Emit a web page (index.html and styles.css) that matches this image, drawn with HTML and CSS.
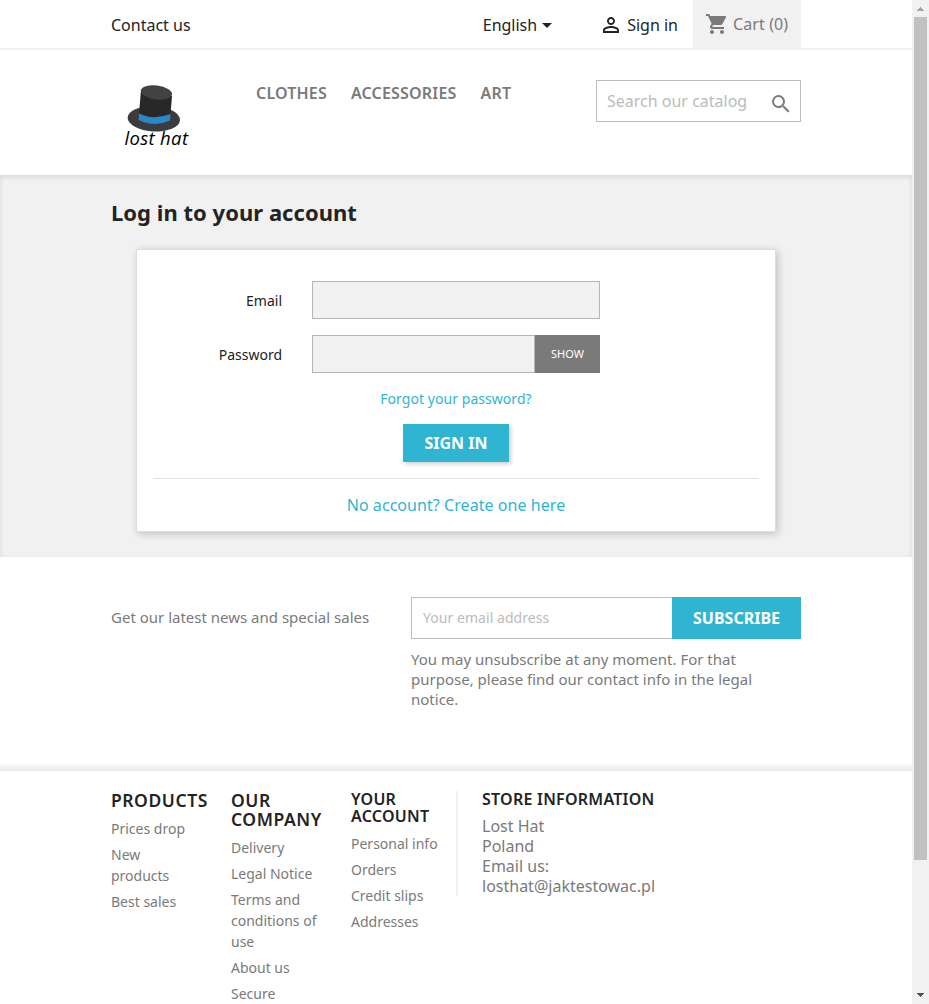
FILE: index.html
```
<!DOCTYPE html>
<html lang="en">
<head>
<meta charset="utf-8">
<title>Login</title>
<link rel="stylesheet" href="styles.css">
</head>
<body>
<div class="page">
  <header class="header">
    <nav class="topbar">
      <a class="contact">Contact us</a>
      <div class="language">English <span class="caret"></span></div>
      <a class="signin"><svg class="user-icon" viewBox="4 4 16 16"><path fill="#232323" d="M12 5.900c1.160 0 2.100.940 2.100 2.100s-.940 2.100-2.100 2.100S9.900 9.160 9.900 8s.940-2.100 2.100-2.100m0 9c2.970 0 6.100 1.460 6.100 2.100v1.100H5.900V17c0-.640 3.130-2.100 6.100-2.100M12 4C9.790 4 8 5.790 8 8s1.790 4 4 4 4-1.790 4-4-1.790-4-4-4zm0 9c-2.670 0-8 1.340-8 4v3h16v-3c0-2.660-5.330-4-8-4z"/></svg>Sign in</a>
      <div class="cart"><svg class="cart-icon" viewBox="0 0 24 24"><path fill="#7a7a7a" d="M7 18c-1.100 0-1.990.900-1.990 2S5.900 22 7 22s2-.900 2-2-.900-2-2-2zM1 2v2h2l3.600 7.590-1.350 2.450c-.160.280-.250.610-.250.960 0 1.100.900 2 2 2h12v-2H7.420c-.140 0-.250-.110-.250-.250l.030-.120.900-1.630h7.450c.750 0 1.410-.410 1.750-1.030l3.580-6.490A1.003 1.003 0 0 0 20 4H5.210l-.940-2H1zm16 16c-1.100 0-1.990.900-1.990 2s.890 2 1.990 2 2-.900 2-2-.900-2-2-2z"/></svg>Cart (0)</div>
    </nav>
    <div class="masthead">
      <svg class="logo" viewBox="0 0 70 66">
        <ellipse cx="33.800" cy="34.800" rx="26.200" ry="12.600" transform="rotate(3 33.800 34.800)" fill="#3c3c3c"/>
        <path d="M20.800 8L18.800 33Q33 42 50.300 33L52 12Z" fill="#292827"/>
        <path d="M19 29.500Q33 36.500 50.500 30L50 36.500Q35 43.500 18.600 36Z" fill="#2a87c8"/>
        <ellipse cx="36.400" cy="8.500" rx="15.700" ry="7" transform="rotate(7 36.400 8.500)" fill="#424242"/>
        <text x="4.500" y="60.500" class="logo-text" textLength="63.500" lengthAdjust="spacing">lost hat</text>
      </svg>
      <ul class="menu"><li>CLOTHES</li><li>ACCESSORIES</li><li>ART</li></ul>
      <div class="search"><span>Search our catalog</span><svg class="search-icon" viewBox="3 3 18 18"><path fill="#7a7a7a" d="M15.500 14h-.790l-.280-.270A6.471 6.471 0 0 0 16 9.500 6.500 6.500 0 1 0 9.500 16c1.610 0 3.090-.590 4.230-1.570l.270.280v.790l5 4.990L20.490 19l-4.990-5zm-6 0C7.010 14 5 11.990 5 9.500S7.010 5 9.500 5 14 7.010 14 9.500 11.990 14 9.500 14z"/></svg></div>
    </div>
  </header>
  <main class="main">
    <h1 class="title">Log in to your account</h1>
    <section class="card">
      <div class="row"><label class="label">Email</label><div class="field"></div></div>
      <div class="row"><label class="label">Password</label><div class="field"><span class="show">SHOW</span></div></div>
      <a class="forgot">Forgot your password?</a>
      <button class="submit">SIGN IN</button>
      <div class="rule"></div>
      <a class="create">No account? Create one here</a>
    </section>
  </main>
  <section class="newsletter">
    <p class="news-title">Get our latest news and special sales</p>
    <div class="news-form">
      <div class="news-input"><span class="news-placeholder">Your email address</span><span class="subscribe">SUBSCRIBE</span></div>
      <p class="news-note">You may unsubscribe at any moment. For that purpose, please find our contact info in the legal notice.</p>
    </div>
  </section>
  <footer class="footer">
    <div class="links"><h3 class="links-title">PRODUCTS</h3><ul><li>Prices drop</li><li>New products</li><li>Best sales</li></ul></div>
    <div class="links"><h3 class="links-title">OUR COMPANY</h3><ul><li>Delivery</li><li>Legal Notice</li><li>Terms and conditions of use</li><li>About us</li><li>Secure</li></ul></div>
    <div class="links"><h3 class="account-title">YOUR ACCOUNT</h3><ul><li>Personal info</li><li>Orders</li><li>Credit slips</li><li>Addresses</li></ul></div>
    <div class="store"><h3 class="store-title">STORE INFORMATION</h3>Lost Hat<br>Poland<br>Email us: losthat@jaktestowac.pl</div>
  </footer>
</div>
<div class="scrollbar">
  <svg class="arrow" viewBox="0 0 17 17" shape-rendering="crispEdges"><path fill="#a3a3a3" d="M8 7h1v1h1v1h1v1h1v1H5v-1h1V9h1V8h1z"/></svg>
  <div class="thumb"></div>
  <svg class="arrow" viewBox="0 0 17 17" shape-rendering="crispEdges"><path fill="#505050" d="M5 6h7v1h-1v1h-1v1H9v1H8V9H7V8H6V7H5z"/></svg>
</div>
</body>
</html>
```
FILE: styles.css
```
* { box-sizing: border-box; }
body { margin: 0; height: 1004px; display: flex; overflow: hidden; background: #fff; color: #232323; font: 16px/20px "Noto Sans", sans-serif; }
h1, h3, p, ul { margin: 0; padding: 0; }
ul { list-style: none; }
.page { width: 912px; height: 1004px; overflow: hidden; }
.header { height: 175px; }
.topbar { height: 50px; border-bottom: 2px solid #f1f1f1; padding: 0 111px; display: flex; align-items: center; }
.contact { flex: 1; padding-top: 2px; }
.language { padding-top: 2px; display: flex; align-items: center; gap: 5px; margin-right: 51px; }
.caret { border: 5px solid transparent; border-top-color: #232323; border-bottom: 0; }
.signin { padding-top: 2px; display: flex; align-items: center; gap: 8px; margin-right: 15px; }
.user-icon { width: 16px; height: 16px; }
.cart { width: 108px; height: 48px; background: #f1f1f1; color: #7a7a7a; display: flex; align-items: center; padding-left: 12px; gap: 4px; letter-spacing: .1px; }
.cart-icon { width: 24px; height: 24px; }
.masthead { display: flex; padding: 30px 111px 0 120px; }
.logo { width: 70px; height: 66px; margin-top: 4px; }
.logo-text { font: italic 18.5px "Open Sans", sans-serif; fill: #000; }
.menu { display: flex; gap: 24px; margin-left: 66px; padding-top: 3px; font-weight: 600; color: #7a7a7a; flex: 1; letter-spacing: .18px; }
.search { width: 205px; height: 42px; border: 1px solid #bdbdbd; display: flex; align-items: center; justify-content: space-between; padding: 0 10px; color: #bbb; }
.search-icon { width: 18px; height: 18px; margin-top: 5px; }
.main { height: 382px; background: #f1f1f1; box-shadow: inset 0 2px 5px rgba(0,0,0,.11); padding: 24px 111px 0; }
.title { font-size: 22px; line-height: 26px; font-weight: 700; letter-spacing: .03px; }
.card { width: 640px; height: 283px; margin: 24px 0 0 25px; background: #fff; border: 1px solid #ddd; box-shadow: 2px 2px 8px rgba(0,0,0,.2); padding: 31px 16px 0; display: flex; flex-direction: column; align-items: center; }
.row { width: 606px; height: 38px; margin-bottom: 16px; display: flex; align-items: center; }
.label { width: 129px; margin-right: 30px; padding-top: 2px; text-align: right; font-size: 14px; }
.field { width: 288px; height: 38px; background: #f1f1f1; border: 1px solid #b5b5b5; display: flex; justify-content: flex-end; }
.show { width: 65px; height: 38px; margin: -1px -1px 0 0; background: #7a7a7a; color: #fff; font-size: 11px; line-height: 38px; text-align: center; border-left: 0; box-shadow: -1px 0 0 #b5b5b5; }
.forgot { font-size: 14px; color: #2fb5d2; letter-spacing: .05px; }
.submit { width: 106px; height: 38px; margin-top: 15px; flex: none; border: 0; background: #2fb5d2; color: #fff; font: 700 16px/38px "Noto Sans", sans-serif; padding: 0; box-shadow: 2px 2px 4px rgba(0,0,0,.2); }
.rule { width: 606px; height: 1px; background: #e5e5e5; margin: 16px 0; }
.create { color: #2fb5d2; letter-spacing: .06px; }
.newsletter { height: 214px; padding: 40px 111px 0; display: flex; color: #7a7a7a; font-size: 15px; background: linear-gradient(#fff 206px, #e8e8e8 214px); }
.news-title { width: 300px; padding-top: 10px; }
.news-form { width: 390px; }
.news-input { height: 42px; border: 1px solid #bdbdbd; display: flex; justify-content: space-between; align-items: center; }
.news-placeholder { padding-left: 11px; font-size: 14px; color: #bbb; letter-spacing: .05px; }
.subscribe { width: 129px; height: 42px; margin-right: -1px; background: #2fb5d2; color: #fff; font: 700 16px/42px "Noto Sans", sans-serif; text-align: center; }
.news-note { width: 350px; padding-top: 10px; }
.footer { height: 233px; padding: 20px 111px 0; display: flex; color: #7a7a7a; }
.links { width: 120px; padding-right: 30px; font-size: 14px; line-height: 21px; }
.links li { margin-bottom: 5px; }
.links-title, .account-title, .store-title { color: #232323; font-weight: 600; letter-spacing: .24px; }
.links-title { font-size: 17.5px; line-height: 19px; margin-bottom: 8px; letter-spacing: .55px; }
.account-title { font-size: 16px; line-height: 17px; margin-bottom: 8px; }
.store { width: 224px; height: 105px; margin-left: -15px; border-left: 2px solid #f1f1f1; padding-left: 24px; }
.store-title { font-size: 16px; line-height: 17px; margin-bottom: 8px; white-space: nowrap; }
.scrollbar { width: 17px; height: 1004px; background: #f1f1f1; display: flex; flex-direction: column; }
.arrow { width: 17px; height: 17px; }
.thumb { width: 13px; height: 843px; margin: 0 2px 127px; background: #c1c1c1; }
```
